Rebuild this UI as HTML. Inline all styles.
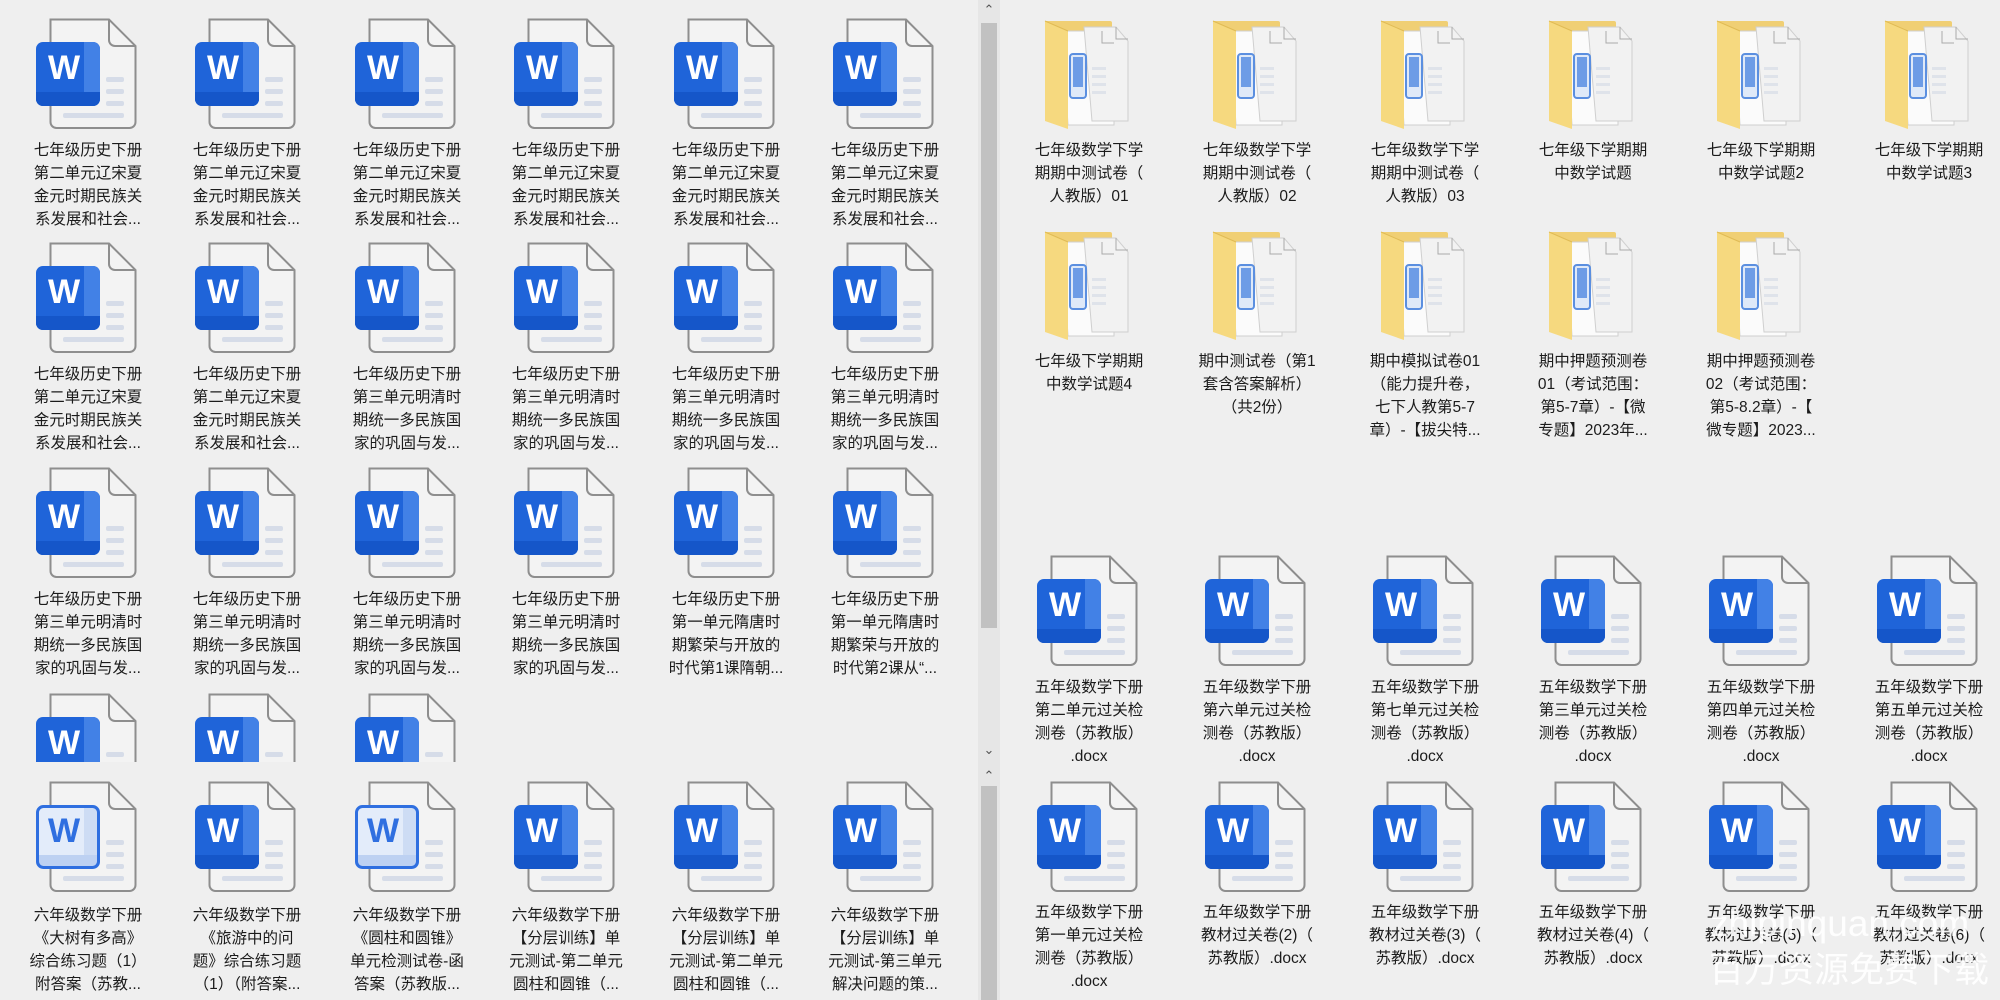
<!DOCTYPE html>
<html><head><meta charset="utf-8">
<style>
*{margin:0;padding:0;box-sizing:border-box}
body{width:2000px;height:1000px;background:#efefef;position:relative;overflow:hidden;font-family:"Liberation Sans","Noto Sans CJK SC",sans-serif}
.p{position:absolute;overflow:hidden;background:#efefef}
.i{position:absolute;width:110px;height:112px}
.t{position:absolute;width:170px;text-align:center;font-size:15.5px;line-height:23px;color:#1b1b1b;white-space:nowrap;padding-top:3px}
.sb{position:absolute;left:978px;width:22px;background:#e6e6e6}
.th{position:absolute;left:981px;width:16px;background:#c1c1c1}
.ch{position:absolute;left:978px;width:22px;text-align:center;font-size:13px;color:#555}
.wm{position:absolute;color:rgba(255,255,255,.9);font-family:"Liberation Sans","Noto Sans CJK SC",sans-serif;white-space:nowrap}
</style></head><body>
<svg width="0" height="0" style="position:absolute">
<defs>
<clipPath id="bc"><rect x="3" y="24" width="64" height="64" rx="7"/></clipPath>
<symbol id="pg" viewBox="0 0 110 112">
<path d="M17.5 1.5H76L102.5 28V104a6 6 0 0 1-6 6H23.5a6 6 0 0 1-6-6Z" fill="#f3f3f3" stroke="#8e8e8e" stroke-width="2"/>
<path d="M76 1.5V22a6 6 0 0 0 6 6H102.5" fill="none" stroke="#8e8e8e" stroke-width="2"/>
<rect x="73" y="59" width="18" height="5" rx="2" fill="#d6dce8"/>
<rect x="73" y="71" width="18" height="5" rx="2" fill="#d6dce8"/>
<rect x="73" y="83" width="18" height="5" rx="2" fill="#d6dce8"/>
<rect x="30" y="95" width="61" height="5" rx="2" fill="#d6dce8"/>
</symbol>
<symbol id="w" viewBox="0 0 110 112">
<use href="#pg"/>
<g clip-path="url(#bc)">
<rect x="3" y="24" width="64" height="64" fill="#1f64d9"/>
<rect x="51" y="24" width="16" height="64" fill="#4281e6"/>
<rect x="3" y="74" width="64" height="14" fill="#1556c9"/>
</g>
</symbol>
<symbol id="wl" viewBox="0 0 110 112">
<use href="#pg"/>
<g clip-path="url(#bc)">
<rect x="3" y="24" width="64" height="64" fill="#e3ecfa"/>
<rect x="51" y="24" width="16" height="64" fill="#cddcf4"/>
<rect x="3" y="74" width="64" height="14" fill="#bdd1f2"/>
</g>
<rect x="4.5" y="25.5" width="61" height="61" rx="6" fill="none" stroke="#2f6fe0" stroke-width="3"/>
</symbol>
<symbol id="f" viewBox="0 0 110 112">
<rect x="11" y="4" width="67" height="100" rx="2" fill="#f0cf74"/>
<path d="M28 14H68L80 28V108H34Z" fill="#fbfbfb" stroke="#cfcfcf"/>
<path d="M50 10H82L94 24V104H58Z" fill="#f2f2f2" stroke="#cfcfcf"/>
<path d="M68 14V26H80" fill="none" stroke="#aaa"/>
<path d="M82 10V22H94" fill="none" stroke="#aaa"/>
<rect x="36" y="37" width="16" height="44" rx="3" fill="#dfe9f8" stroke="#5b8fe0" stroke-width="2"/>
<rect x="39" y="40" width="10" height="30" fill="#6d9ce6"/>
<g fill="#dfe3ea"><rect x="58" y="50" width="14" height="3"/><rect x="58" y="58" width="14" height="3"/><rect x="58" y="66" width="14" height="3"/><rect x="58" y="74" width="14" height="3"/></g>
<path d="M11 4L34 14V112L11 104Z" fill="#f6d97f"/>
<path d="M11 4L34 14" stroke="#e0bb55" stroke-width="1"/>
</symbol>
</defs></svg>

<!-- upper-left panel -->
<div class="p" style="left:0;top:0;width:978px;height:762px">
<svg class="i" style="left:33px;top:18px"><use href="#w"/><text x="31" y="61" fill="#fff" font-size="34" font-weight="bold" text-anchor="middle">W</text></svg><div class="t" style="left:3px;top:136px">七年级历史下册<br>第二单元辽宋夏<br>金元时期民族关<br>系发展和社会...</div>
<svg class="i" style="left:192px;top:18px"><use href="#w"/><text x="31" y="61" fill="#fff" font-size="34" font-weight="bold" text-anchor="middle">W</text></svg><div class="t" style="left:162px;top:136px">七年级历史下册<br>第二单元辽宋夏<br>金元时期民族关<br>系发展和社会...</div>
<svg class="i" style="left:352px;top:18px"><use href="#w"/><text x="31" y="61" fill="#fff" font-size="34" font-weight="bold" text-anchor="middle">W</text></svg><div class="t" style="left:322px;top:136px">七年级历史下册<br>第二单元辽宋夏<br>金元时期民族关<br>系发展和社会...</div>
<svg class="i" style="left:511px;top:18px"><use href="#w"/><text x="31" y="61" fill="#fff" font-size="34" font-weight="bold" text-anchor="middle">W</text></svg><div class="t" style="left:481px;top:136px">七年级历史下册<br>第二单元辽宋夏<br>金元时期民族关<br>系发展和社会...</div>
<svg class="i" style="left:671px;top:18px"><use href="#w"/><text x="31" y="61" fill="#fff" font-size="34" font-weight="bold" text-anchor="middle">W</text></svg><div class="t" style="left:641px;top:136px">七年级历史下册<br>第二单元辽宋夏<br>金元时期民族关<br>系发展和社会...</div>
<svg class="i" style="left:830px;top:18px"><use href="#w"/><text x="31" y="61" fill="#fff" font-size="34" font-weight="bold" text-anchor="middle">W</text></svg><div class="t" style="left:800px;top:136px">七年级历史下册<br>第二单元辽宋夏<br>金元时期民族关<br>系发展和社会...</div>

<svg class="i" style="left:33px;top:242px"><use href="#w"/><text x="31" y="61" fill="#fff" font-size="34" font-weight="bold" text-anchor="middle">W</text></svg><div class="t" style="left:3px;top:360px">七年级历史下册<br>第二单元辽宋夏<br>金元时期民族关<br>系发展和社会...</div>
<svg class="i" style="left:192px;top:242px"><use href="#w"/><text x="31" y="61" fill="#fff" font-size="34" font-weight="bold" text-anchor="middle">W</text></svg><div class="t" style="left:162px;top:360px">七年级历史下册<br>第二单元辽宋夏<br>金元时期民族关<br>系发展和社会...</div>
<svg class="i" style="left:352px;top:242px"><use href="#w"/><text x="31" y="61" fill="#fff" font-size="34" font-weight="bold" text-anchor="middle">W</text></svg><div class="t" style="left:322px;top:360px">七年级历史下册<br>第三单元明清时<br>期统一多民族国<br>家的巩固与发...</div>
<svg class="i" style="left:511px;top:242px"><use href="#w"/><text x="31" y="61" fill="#fff" font-size="34" font-weight="bold" text-anchor="middle">W</text></svg><div class="t" style="left:481px;top:360px">七年级历史下册<br>第三单元明清时<br>期统一多民族国<br>家的巩固与发...</div>
<svg class="i" style="left:671px;top:242px"><use href="#w"/><text x="31" y="61" fill="#fff" font-size="34" font-weight="bold" text-anchor="middle">W</text></svg><div class="t" style="left:641px;top:360px">七年级历史下册<br>第三单元明清时<br>期统一多民族国<br>家的巩固与发...</div>
<svg class="i" style="left:830px;top:242px"><use href="#w"/><text x="31" y="61" fill="#fff" font-size="34" font-weight="bold" text-anchor="middle">W</text></svg><div class="t" style="left:800px;top:360px">七年级历史下册<br>第三单元明清时<br>期统一多民族国<br>家的巩固与发...</div>

<svg class="i" style="left:33px;top:467px"><use href="#w"/><text x="31" y="61" fill="#fff" font-size="34" font-weight="bold" text-anchor="middle">W</text></svg><div class="t" style="left:3px;top:585px">七年级历史下册<br>第三单元明清时<br>期统一多民族国<br>家的巩固与发...</div>
<svg class="i" style="left:192px;top:467px"><use href="#w"/><text x="31" y="61" fill="#fff" font-size="34" font-weight="bold" text-anchor="middle">W</text></svg><div class="t" style="left:162px;top:585px">七年级历史下册<br>第三单元明清时<br>期统一多民族国<br>家的巩固与发...</div>
<svg class="i" style="left:352px;top:467px"><use href="#w"/><text x="31" y="61" fill="#fff" font-size="34" font-weight="bold" text-anchor="middle">W</text></svg><div class="t" style="left:322px;top:585px">七年级历史下册<br>第三单元明清时<br>期统一多民族国<br>家的巩固与发...</div>
<svg class="i" style="left:511px;top:467px"><use href="#w"/><text x="31" y="61" fill="#fff" font-size="34" font-weight="bold" text-anchor="middle">W</text></svg><div class="t" style="left:481px;top:585px">七年级历史下册<br>第三单元明清时<br>期统一多民族国<br>家的巩固与发...</div>
<svg class="i" style="left:671px;top:467px"><use href="#w"/><text x="31" y="61" fill="#fff" font-size="34" font-weight="bold" text-anchor="middle">W</text></svg><div class="t" style="left:641px;top:585px">七年级历史下册<br>第一单元隋唐时<br>期繁荣与开放的<br>时代第1课隋朝...</div>
<svg class="i" style="left:830px;top:467px"><use href="#w"/><text x="31" y="61" fill="#fff" font-size="34" font-weight="bold" text-anchor="middle">W</text></svg><div class="t" style="left:800px;top:585px">七年级历史下册<br>第一单元隋唐时<br>期繁荣与开放的<br>时代第2课从“...</div>

<svg class="i" style="left:33px;top:693px"><use href="#w"/><text x="31" y="61" fill="#fff" font-size="34" font-weight="bold" text-anchor="middle">W</text></svg>
<svg class="i" style="left:192px;top:693px"><use href="#w"/><text x="31" y="61" fill="#fff" font-size="34" font-weight="bold" text-anchor="middle">W</text></svg>
<svg class="i" style="left:352px;top:693px"><use href="#w"/><text x="31" y="61" fill="#fff" font-size="34" font-weight="bold" text-anchor="middle">W</text></svg>
</div>

<!-- lower-left panel -->
<div class="p" style="left:0;top:762px;width:978px;height:238px">
<svg class="i" style="left:33px;top:19px"><use href="#wl"/><text x="31" y="61" fill="#2f6fe0" font-size="34" font-weight="bold" text-anchor="middle">W</text></svg><div class="t" style="left:3px;top:139px">六年级数学下册<br>《大树有多高》<br>综合练习题（1）<br>附答案（苏教...</div>
<svg class="i" style="left:192px;top:19px"><use href="#w"/><text x="31" y="61" fill="#fff" font-size="34" font-weight="bold" text-anchor="middle">W</text></svg><div class="t" style="left:162px;top:139px">六年级数学下册<br>《旅游中的问<br>题》综合练习题<br>（1）（附答案...</div>
<svg class="i" style="left:352px;top:19px"><use href="#wl"/><text x="31" y="61" fill="#2f6fe0" font-size="34" font-weight="bold" text-anchor="middle">W</text></svg><div class="t" style="left:322px;top:139px">六年级数学下册<br>《圆柱和圆锥》<br>单元检测试卷-函<br>答案（苏教版...</div>
<svg class="i" style="left:511px;top:19px"><use href="#w"/><text x="31" y="61" fill="#fff" font-size="34" font-weight="bold" text-anchor="middle">W</text></svg><div class="t" style="left:481px;top:139px">六年级数学下册<br>【分层训练】单<br>元测试-第二单元<br>圆柱和圆锥（...</div>
<svg class="i" style="left:671px;top:19px"><use href="#w"/><text x="31" y="61" fill="#fff" font-size="34" font-weight="bold" text-anchor="middle">W</text></svg><div class="t" style="left:641px;top:139px">六年级数学下册<br>【分层训练】单<br>元测试-第二单元<br>圆柱和圆锥（...</div>
<svg class="i" style="left:830px;top:19px"><use href="#w"/><text x="31" y="61" fill="#fff" font-size="34" font-weight="bold" text-anchor="middle">W</text></svg><div class="t" style="left:800px;top:139px">六年级数学下册<br>【分层训练】单<br>元测试-第三单元<br>解决问题的策...</div>
</div>

<!-- scrollbars -->
<div class="sb" style="top:0;height:1000px"></div>
<div class="th" style="top:23px;height:605px"></div>
<div class="ch" style="top:2px">&#8963;</div>
<div class="ch" style="top:742px">&#8964;</div>
<div class="ch" style="top:768px">&#8963;</div>
<div class="th" style="top:786px;height:214px"></div>

<!-- right panel -->
<div class="p" style="left:1000px;top:0;width:1000px;height:1000px">
<svg class="i" style="left:34px;top:17px"><use href="#f"/></svg><div class="t" style="left:4px;top:136px">七年级数学下学<br>期期中测试卷（<br>人教版）01</div>
<svg class="i" style="left:202px;top:17px"><use href="#f"/></svg><div class="t" style="left:172px;top:136px">七年级数学下学<br>期期中测试卷（<br>人教版）02</div>
<svg class="i" style="left:370px;top:17px"><use href="#f"/></svg><div class="t" style="left:340px;top:136px">七年级数学下学<br>期期中测试卷（<br>人教版）03</div>
<svg class="i" style="left:538px;top:17px"><use href="#f"/></svg><div class="t" style="left:508px;top:136px">七年级下学期期<br>中数学试题</div>
<svg class="i" style="left:706px;top:17px"><use href="#f"/></svg><div class="t" style="left:676px;top:136px">七年级下学期期<br>中数学试题2</div>
<svg class="i" style="left:874px;top:17px"><use href="#f"/></svg><div class="t" style="left:844px;top:136px">七年级下学期期<br>中数学试题3</div>

<svg class="i" style="left:34px;top:228px"><use href="#f"/></svg><div class="t" style="left:4px;top:347px">七年级下学期期<br>中数学试题4</div>
<svg class="i" style="left:202px;top:228px"><use href="#f"/></svg><div class="t" style="left:172px;top:347px">期中测试卷（第1<br>套含答案解析）<br>（共2份）</div>
<svg class="i" style="left:370px;top:228px"><use href="#f"/></svg><div class="t" style="left:340px;top:347px">期中模拟试卷01<br>（能力提升卷，<br>七下人教第5-7<br>章）-【拔尖特...</div>
<svg class="i" style="left:538px;top:228px"><use href="#f"/></svg><div class="t" style="left:508px;top:347px">期中押题预测卷<br>01（考试范围：<br>第5-7章）-【微<br>专题】2023年...</div>
<svg class="i" style="left:706px;top:228px"><use href="#f"/></svg><div class="t" style="left:676px;top:347px">期中押题预测卷<br>02（考试范围：<br>第5-8.2章）-【<br>微专题】2023...</div>

<svg class="i" style="left:34px;top:555px"><use href="#w"/><text x="31" y="61" fill="#fff" font-size="34" font-weight="bold" text-anchor="middle">W</text></svg><div class="t" style="left:4px;top:673px">五年级数学下册<br>第二单元过关检<br>测卷（苏教版）<br>.docx</div>
<svg class="i" style="left:202px;top:555px"><use href="#w"/><text x="31" y="61" fill="#fff" font-size="34" font-weight="bold" text-anchor="middle">W</text></svg><div class="t" style="left:172px;top:673px">五年级数学下册<br>第六单元过关检<br>测卷（苏教版）<br>.docx</div>
<svg class="i" style="left:370px;top:555px"><use href="#w"/><text x="31" y="61" fill="#fff" font-size="34" font-weight="bold" text-anchor="middle">W</text></svg><div class="t" style="left:340px;top:673px">五年级数学下册<br>第七单元过关检<br>测卷（苏教版）<br>.docx</div>
<svg class="i" style="left:538px;top:555px"><use href="#w"/><text x="31" y="61" fill="#fff" font-size="34" font-weight="bold" text-anchor="middle">W</text></svg><div class="t" style="left:508px;top:673px">五年级数学下册<br>第三单元过关检<br>测卷（苏教版）<br>.docx</div>
<svg class="i" style="left:706px;top:555px"><use href="#w"/><text x="31" y="61" fill="#fff" font-size="34" font-weight="bold" text-anchor="middle">W</text></svg><div class="t" style="left:676px;top:673px">五年级数学下册<br>第四单元过关检<br>测卷（苏教版）<br>.docx</div>
<svg class="i" style="left:874px;top:555px"><use href="#w"/><text x="31" y="61" fill="#fff" font-size="34" font-weight="bold" text-anchor="middle">W</text></svg><div class="t" style="left:844px;top:673px">五年级数学下册<br>第五单元过关检<br>测卷（苏教版）<br>.docx</div>

<svg class="i" style="left:34px;top:781px"><use href="#w"/><text x="31" y="61" fill="#fff" font-size="34" font-weight="bold" text-anchor="middle">W</text></svg><div class="t" style="left:4px;top:898px">五年级数学下册<br>第一单元过关检<br>测卷（苏教版）<br>.docx</div>
<svg class="i" style="left:202px;top:781px"><use href="#w"/><text x="31" y="61" fill="#fff" font-size="34" font-weight="bold" text-anchor="middle">W</text></svg><div class="t" style="left:172px;top:898px">五年级数学下册<br>教材过关卷(2)（<br>苏教版）.docx</div>
<svg class="i" style="left:370px;top:781px"><use href="#w"/><text x="31" y="61" fill="#fff" font-size="34" font-weight="bold" text-anchor="middle">W</text></svg><div class="t" style="left:340px;top:898px">五年级数学下册<br>教材过关卷(3)（<br>苏教版）.docx</div>
<svg class="i" style="left:538px;top:781px"><use href="#w"/><text x="31" y="61" fill="#fff" font-size="34" font-weight="bold" text-anchor="middle">W</text></svg><div class="t" style="left:508px;top:898px">五年级数学下册<br>教材过关卷(4)（<br>苏教版）.docx</div>
<svg class="i" style="left:706px;top:781px"><use href="#w"/><text x="31" y="61" fill="#fff" font-size="34" font-weight="bold" text-anchor="middle">W</text></svg><div class="t" style="left:676px;top:898px">五年级数学下册<br>教材过关卷(5)（<br>苏教版）.docx</div>
<svg class="i" style="left:874px;top:781px"><use href="#w"/><text x="31" y="61" fill="#fff" font-size="34" font-weight="bold" text-anchor="middle">W</text></svg><div class="t" style="left:844px;top:898px">五年级数学下册<br>教材过关卷(6)（<br>苏教版）.docx</div>
</div>

<div class="wm" style="left:1710px;top:903px;font-size:37px;line-height:42px">zhipinquan.com</div>
<div class="wm" style="left:1709px;top:950px;font-size:35px;line-height:42px">百万资源免费下载</div>
</body></html>
